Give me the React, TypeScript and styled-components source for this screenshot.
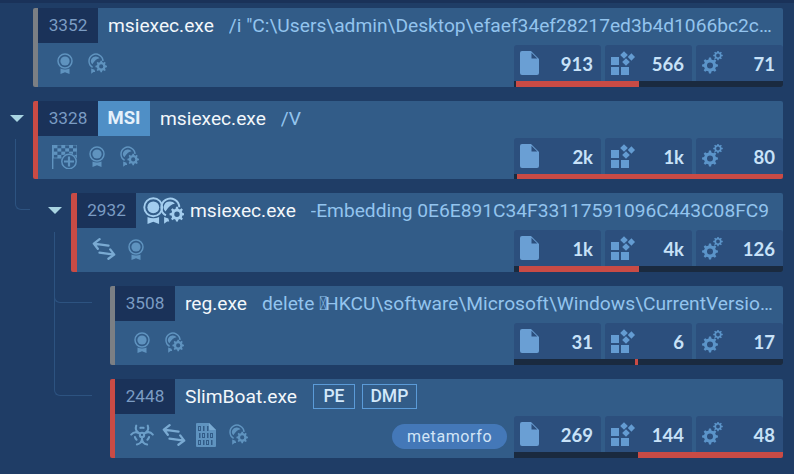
import React from 'react';
import styled, { createGlobalStyle } from 'styled-components';
import { Biohazard } from 'lucide-react';

const Global = createGlobalStyle`
  html, body { margin: 0; padding: 0; background: #1f3d66; }
  #root { height: 474px; overflow: hidden; }
`;

const Page = styled.div`
  height: 474px;
  width: 794px;
  overflow: hidden;
  background: #1f3d66;
  font-family: Roboto, "Liberation Sans", sans-serif;
`;
const TopBand = styled.div`
  height: 3px;
  background: #1a3259;
`;
const Tree = styled.div`
  display: flex;
  flex-direction: column;
  gap: 14px;
  padding: 4.9px 11px 0 0;
`;
const Node = styled.div<{ $indent: number }>`
  position: relative;
  padding-left: ${p => p.$indent}px;
`;
const Toggle = styled.span<{ $left: number }>`
  position: absolute;
  left: ${p => p.$left}px;
  top: 14px;
  width: 0;
  height: 0;
  border-left: 7.5px solid transparent;
  border-right: 7.5px solid transparent;
  border-top: 7.5px solid #a9d5e2;
`;
const Elbow = styled.span<{ $left: number; $top: number; $w: number; $h: number }>`
  position: absolute;
  left: ${p => p.$left}px;
  top: ${p => p.$top}px;
  width: ${p => p.$w}px;
  height: ${p => p.$h}px;
  box-sizing: border-box;
  border-left: 1px solid #2d5380;
  border-bottom: 1px solid #2d5380;
  border-bottom-left-radius: 6px;
`;
const Card = styled.div<{ $accent: string; $edge: number }>`
  height: 78.75px;
  display: flex;
  flex-direction: column;
  background: #325c88;
  border-left: ${p => p.$edge}px solid ${p => p.$accent};
  border-radius: 2px;
  overflow: hidden;
`;
const Head = styled.div`
  height: 35px;
  flex: none;
  display: flex;
  align-items: center;
  font-size: 19.2px;
  line-height: 35px;
  padding-right: 5px;
`;
const Pid = styled.span<{ $w: number }>`
  flex: none;
  width: ${p => p.$w}px;
  height: 35px;
  background: #1a3259;
  color: #7b9cc3;
  font-size: 17.2px;
  font-weight: 400;
  text-align: center;
`;
const Kind = styled.span`
  flex: none;
  width: 52px;
  height: 35px;
  background: #4f8fc6;
  color: #e4f1fb;
  font-size: 18.5px;
  font-weight: 700;
  text-align: center;
`;
const TitleIcons = styled.span`
  flex: none;
  display: flex;
  align-items: center;
  margin: 0 -4px 0 7px;
  color: #a3cdee;
  & > svg + svg { margin-left: -4px; }
`;
const Name = styled.span`
  flex: none;
  color: #f2f7fb;
  margin-left: 10px;
`;
const Args = styled.span`
  min-width: 0;
  flex: 1;
  margin-left: 15px;
  color: #93c4ee;
  white-space: nowrap;
  overflow: hidden;
  text-overflow: ellipsis;
`;
const Tofu = styled.span`
  letter-spacing: -2.5px;
  margin-right: 0;
`;
const Tags = styled.span`
  display: flex;
  gap: 7px;
  margin-left: 16px;
`;
const Tag = styled.span`
  flex: none;
  box-sizing: border-box;
  min-width: 42px;
  height: 25px;
  line-height: 23px;
  padding: 0 7.5px;
  border: 1px solid #5b9bd8;
  color: #d3e8fa;
  font-size: 17.5px;
  font-weight: 500;
  text-align: center;
`;
const Foot = styled.div`
  flex: 1;
  display: flex;
  align-items: flex-end;
  justify-content: space-between;
`;
const IconRow = styled.div`
  display: flex;
  align-items: center;
  height: 44px;
  padding: 0 0 2px 10.5px;
  box-sizing: border-box;
  color: #5f93bf;
`;
const Slot = styled.span`
  width: 32px;
  display: flex;
  justify-content: center;
  align-items: center;
`;
const FootRight = styled.div`
  display: flex;
  align-items: flex-start;
  gap: 7px;
`;
const Pill = styled.span`
  height: 25px;
  line-height: 25px;
  width: 115px;
  margin-top: 8px;
  text-align: center;
  border-radius: 13px;
  background: #4478b8;
  color: #d2e5f6;
  font-size: 16px;
  letter-spacing: 0.6px;
`;
const Metrics = styled.div`
  width: 269px;
  flex: none;
`;
const Cells = styled.div`
  display: grid;
  grid-template-columns: repeat(3, 87px);
  gap: 4px;
  height: 36px;
`;
const Cell = styled.div`
  display: flex;
  align-items: center;
  justify-content: space-between;
  padding: 0 8px 0 6px;
  background: #2c4f7d;
  border-radius: 3px 3px 0 0;
  color: #c8e2f8;
  font-family: Lato, "Noto Sans", sans-serif;
  font-weight: 700;
  font-size: 18.5px;
`;
const Value = styled.span`
  padding-top: 2px;
`;
const Bar = styled.div`
  height: 6px;
  background: #1a2a3f;
  display: flex;
`;
const BarFill = styled.div<{ $start: number; $width: number }>`
  margin-left: ${p => p.$start}px;
  width: ${p => p.$width}px;
  background: #c94b45;
`;

function gear(cx: number, cy: number, r: number, teeth: number, hole: number) {
  const pts: string[] = [];
  const inner = r * 0.76;
  const step = (Math.PI * 2) / teeth;
  const p = (a: number, rad: number) => `${(cx + Math.cos(a) * rad).toFixed(2)} ${(cy + Math.sin(a) * rad).toFixed(2)}`;
  for (let i = 0; i < teeth; i++) {
    const a = i * step;
    pts.push(p(a - step * 0.3, inner), p(a - step * 0.17, r), p(a + step * 0.17, r), p(a + step * 0.3, inner));
  }
  const ring = `M${cx - hole} ${cy}a${hole} ${hole} 0 1 0 ${hole * 2} 0a${hole} ${hole} 0 1 0 ${-hole * 2} 0Z`;
  return `M${pts.join('L')}Z${ring}`;
}

const Badge = ({ h = 21 }: { h?: number }) => (
  <svg width={(h * 16) / 21} height={h} viewBox="0 0 16 21" fill="currentColor">
    <circle cx="8" cy="8" r="7" fill="none" stroke="currentColor" strokeWidth="1.5" />
    <circle cx="8" cy="8" r="4.6" />
    <path d="M3.5 15.6Q8 17.6 12.5 15.6V21L8 19.2 3.5 21Z" />
  </svg>
);

const BadgeGear = ({ h = 21 }: { h?: number }) => (
  <svg width={(h * 19) / 21} height={h} viewBox="0 0 19 21" fill="currentColor">
    <path d="M4.6 14.3A7 7 0 1 1 15 8" fill="none" stroke="currentColor" strokeWidth="1.5" />
    <path d="M4.3 11.2A4.5 4.5 0 0 1 8 3.5a4.5 4.5 0 0 1 3.6 1.8Q8 5.5 4.3 11.2Z" />
    <path d="M3.2 15.5 6.5 16.8 7.2 19 5.5 19 3.2 20.8Z" />
    <path fillRule="evenodd" d={gear(13.2, 13.4, 5.8, 8, 2.1)} />
  </svg>
);

const ShiftedGear = styled.span`
  display: flex;
  margin-left: 2px;
`;

const Flag = () => {
  const squares: React.ReactNode[] = [];
  for (let y = 0; y < 4; y++) {
    for (let x = 0; x < 6; x++) {
      if ((x + y) % 2 === 0) squares.push(<rect key={`${x}-${y}`} x={1.5 + x * 3.9} y={y * 3.3} width="3.9" height="3.3" />);
    }
  }
  return (
    <svg width="25" height="24" viewBox="0 0 25 24" fill="currentColor">
      <rect x="0" y="0" width="1.4" height="24" />
      {squares}
      <rect x="1.5" y="0" width="23.4" height="13" fill="none" stroke="currentColor" strokeWidth="0.8" />
      <circle cx="17" cy="16.5" r="8.3" fill="#325c88" />
      <circle cx="17" cy="16.5" r="7.2" fill="none" stroke="currentColor" strokeWidth="1.5" />
      <path d="M17 11.5v10M12 16.5h10" stroke="currentColor" strokeWidth="2.2" />
    </svg>
  );
};

const Arrows = () => (
  <svg width="24" height="22" viewBox="0 0 24 22" fill="none" stroke="#7aaad2" strokeWidth="2.3" strokeLinecap="round" strokeLinejoin="round">
    <path d="M1.8 5.6 16.5 7.6M7.6 1.2 1.8 5.6 5.8 10.8" />
    <path d="M7.5 14.6 22.2 16.6M18.2 11.4 22.2 16.6 16.4 20.8" />
  </svg>
);

const Binary = () => {
  const rows = ['011', '1010', '0101'];
  return (
    <svg width="20" height="24" viewBox="0 0 20 24">
      <path d="M0 1a1 1 0 0 1 1-1H13L20 7V23a1 1 0 0 1-1 1H1a1 1 0 0 1-1-1Z" fill="currentColor" />
      <path d="M13 0 20 7H14a1 1 0 0 1-1-1Z" fill="#7aaad2" />
      {rows.map((r, y) =>
        r.split('').map((c, x) =>
          c === '1' ? (
            <rect key={`${x}-${y}`} x={3 + x * 4} y={3 + y * 7} width="1.5" height="5" fill="#325c88" />
          ) : (
            <rect key={`${x}-${y}`} x={2.5 + x * 4} y={3.5 + y * 7} width="2" height="4" fill="none" stroke="#325c88" strokeWidth="1" />
          )
        )
      )}
    </svg>
  );
};

const FileIcon = () => (
  <svg width="19" height="24" viewBox="0 0 19 24" fill="#6a9fd4">
    <path d="M0 2a2 2 0 0 1 2-2H11L19 8V22a2 2 0 0 1-2 2H2a2 2 0 0 1-2-2Z" />
    <path d="M11.5 1.8V7.6H17.3Z" fill="#2c4f7d" />
  </svg>
);

const Modules = () => (
  <svg width="24" height="24" viewBox="0 0 24 24" fill="#649cd2">
    <rect x="0" y="6" width="8" height="8" />
    <rect x="0" y="16" width="8" height="8" />
    <rect x="10" y="16" width="8" height="8" />
    <path d="M13 .2 16.8 4 13 7.8 9.2 4Z" />
    <path d="M20.4 2.2 24 6 20.4 9.8 16.8 6Z" />
    <path d="M15 7.2 18.8 11 15 14.8 11.2 11Z" />
  </svg>
);

const Gears = () => (
  <svg width="21" height="23" viewBox="0 0 21 23" fill="#5b94c9" fillRule="evenodd">
    <path d={gear(8, 14.5, 8, 8, 3)} />
    <path d={gear(16, 4.5, 4.8, 8, 1.9)} />
  </svg>
);

const GearSlot = () => (
  <ShiftedGear>
    <BadgeGear />
  </ShiftedGear>
);

type Row = {
  pid: string;
  indent: number;
  edge?: number;
  pidW?: number;
  accent: string;
  kind?: string;
  titleIcons?: boolean;
  name: string;
  args?: React.ReactNode;
  tags?: string[];
  pill?: string;
  icons: React.ReactNode[];
  metrics: [string, string, string];
  fill: [number, number];
  toggle?: number;
  elbows?: { left: number; top: number; w: number; h: number }[];
};

const GREY = '#7b7f84';
const RED = '#c94b45';

const rows: Row[] = [
  {
    pid: '3352', indent: 33, accent: GREY, name: 'msiexec.exe',
    args: '/i "C:\\Users\\admin\\Desktop\\efaef34ef28217ed3b4d1066bc2c8a1fd09c6e4b7d',
    icons: [<Badge />, <GearSlot />],
    metrics: ['913', '566', '71'], fill: [2, 123],
  },
  {
    pid: '3328', indent: 33, accent: RED, kind: 'MSI', name: 'msiexec.exe', args: '/V',
    icons: [<Flag />, <Badge />, <GearSlot />],
    metrics: ['2k', '1k', '80'], fill: [3, 266], toggle: 10,
  },
  {
    pid: '2932', indent: 71, edge: 6, pidW: 59, accent: RED, titleIcons: true, name: 'msiexec.exe',
    args: '-Embedding 0E6E891C34F33117591096C443C08FC9',
    icons: [<Arrows />, <Badge />],
    metrics: ['1k', '4k', '126'], fill: [5, 120], toggle: 48,
    elbows: [{ left: 15, top: -54, w: 15, h: 71 }],
  },
  {
    pid: '3508', indent: 110, accent: GREY, name: 'reg.exe',
    args: <>delete <Tofu>{'\uE000'}</Tofu>HKCU\software\Microsoft\Windows\CurrentVersion\Run /v Updater /f</>,
    icons: [<Badge />, <GearSlot />],
    metrics: ['31', '6', '17'], fill: [121, 3],
    elbows: [{ left: 54, top: -54, w: 38, h: 71 }],
  },
  {
    pid: '2448', indent: 110, accent: RED, name: 'SlimBoat.exe', tags: ['PE', 'DMP'], pill: 'metamorfo',
    icons: [<Biohazard size={26} strokeWidth={1.9} color="#6c9fc9" />, <Arrows />, <Binary />, <GearSlot />],
    metrics: ['269', '144', '48'], fill: [124, 145],
    elbows: [{ left: 54, top: -84, w: 38, h: 101 }],
  },
];

export default function App() {
  return (
    <Page>
      <Global />
      <TopBand />
      <Tree>
        {rows.map(r => (
          <Node key={r.pid} $indent={r.indent}>
            {r.elbows?.map((e, i) => <Elbow key={i} $left={e.left} $top={e.top} $w={e.w} $h={e.h} />)}
            {r.toggle !== undefined && <Toggle $left={r.toggle} />}
            <Card $accent={r.accent} $edge={r.edge ?? 5}>
              <Head>
                <Pid $w={r.pidW ?? 60}>{r.pid}</Pid>
                {r.kind && <Kind>{r.kind}</Kind>}
                {r.titleIcons && (
                  <TitleIcons>
                    <Badge h={27} />
                    <BadgeGear h={27} />
                  </TitleIcons>
                )}
                <Name>{r.name}</Name>
                {r.tags && (
                  <Tags>
                    {r.tags.map(t => <Tag key={t}>{t}</Tag>)}
                  </Tags>
                )}
                {r.args && <Args>{r.args}</Args>}
              </Head>
              <Foot>
                <IconRow>
                  {r.icons.map((ic, i) => <Slot key={i}>{ic}</Slot>)}
                </IconRow>
                <FootRight>
                  {r.pill && <Pill>{r.pill}</Pill>}
                  <Metrics>
                    <Cells>
                      <Cell><FileIcon /><Value>{r.metrics[0]}</Value></Cell>
                      <Cell><Modules /><Value>{r.metrics[1]}</Value></Cell>
                      <Cell><Gears /><Value>{r.metrics[2]}</Value></Cell>
                    </Cells>
                    <Bar><BarFill $start={r.fill[0]} $width={r.fill[1]} /></Bar>
                  </Metrics>
                </FootRight>
              </Foot>
            </Card>
          </Node>
        ))}
      </Tree>
    </Page>
  );
}
